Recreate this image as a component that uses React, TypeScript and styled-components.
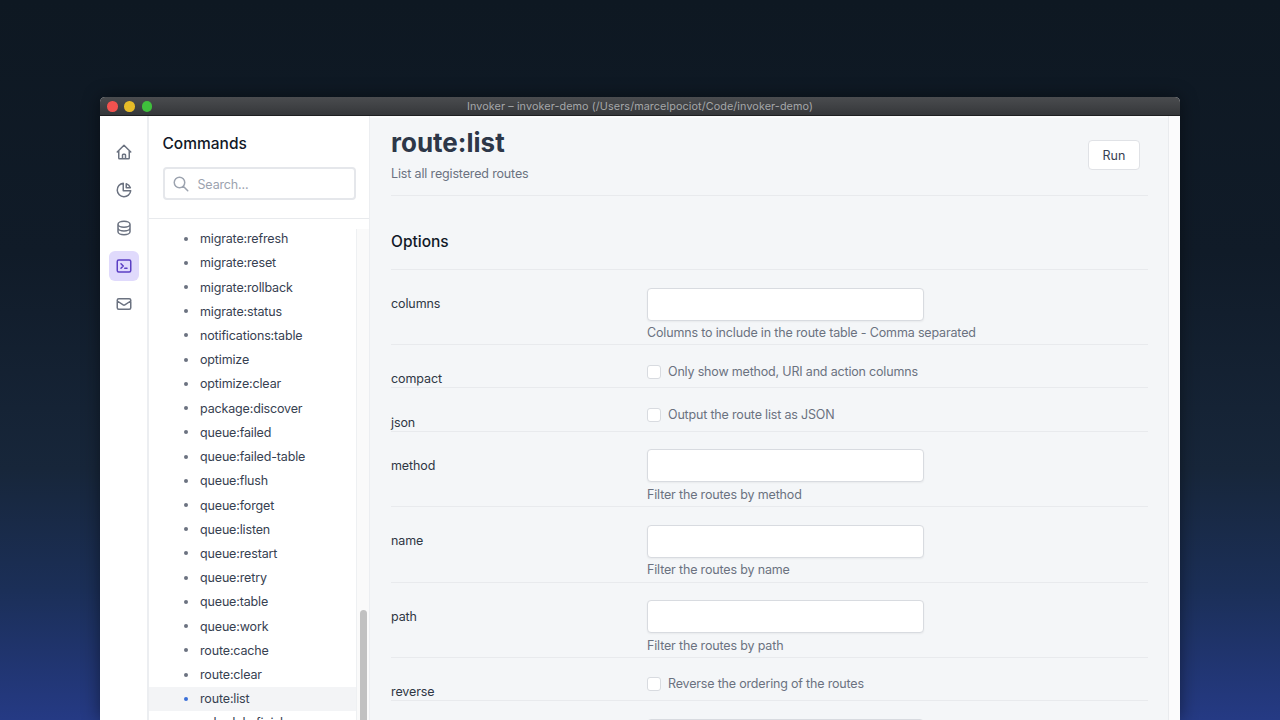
import React from 'react';
import styled, { createGlobalStyle } from 'styled-components';

const GlobalStyle = createGlobalStyle`
  html, body {
    margin: 0;
    height: 720px;
    overflow: hidden;
    background: linear-gradient(180deg, #0e1822 0%, #101b28 35%, #17263a 65%, #1b2f58 82%, #253a84 100%);
    font-family: 'Inter', 'Liberation Sans', sans-serif;
  }
  * { box-sizing: border-box; }
`;

const Stage = styled.div`
  height: 720px;
  padding: 97px 100px 0;
  overflow: hidden;
`;

const Window = styled.div`
  height: 623px;
  border-radius: 5px 5px 0 0;
  overflow: hidden;
  display: flex;
  flex-direction: column;
  background: #fff;
  box-shadow: 0 0 18px rgba(0, 0, 0, 0.45);
`;

const TitleBar = styled.div`
  height: 19px;
  flex: none;
  display: flex;
  align-items: center;
  justify-content: center;
  position: relative;
  padding-top: 1px;
  background: linear-gradient(180deg, #4a4c4f 0%, #35373a 100%);
  border-bottom: 1px solid #1e1f21;
  color: #a5a7a9;
  font-size: 10.8px;
  letter-spacing: 0.1px;
`;

const Lights = styled.div`
  position: absolute;
  left: 7px;
  top: 4px;
  display: flex;
  gap: 6.8px;
`;

const Light = styled.span<{ $color: string }>`
  width: 10.5px;
  height: 10.5px;
  border-radius: 50%;
  background: ${(p) => p.$color};
`;

const Body = styled.div`
  flex: 1;
  min-height: 0;
  display: flex;
`;

const Rail = styled.nav`
  width: 49px;
  flex: none;
  border-right: 2px solid #eceef1;
  padding-top: 21px;
  display: flex;
  flex-direction: column;
  align-items: center;
  gap: 8px;
`;

const RailButton = styled.div<{ $active?: boolean }>`
  width: 30px;
  height: 30px;
  border-radius: 6px;
  display: flex;
  align-items: center;
  justify-content: center;
  background: ${(p) => (p.$active ? '#e0dafc' : 'transparent')};
  color: ${(p) => (p.$active ? '#5b3fc4' : '#6b7280')};
`;

const Panel = styled.aside`
  width: 221px;
  flex: none;
  display: flex;
  flex-direction: column;
  border-right: 1px solid #eceef1;
`;

const PanelHead = styled.div`
  height: 103px;
  flex: none;
  padding: 18px 13px 0 13.5px;
  border-bottom: 1px solid #e8eaed;
`;

const PanelTitle = styled.h2`
  margin: 0 0 13px;
  font-size: 15.5px;
  line-height: 20px;
  font-weight: 500;
  color: #111827;
`;

const Search = styled.div`
  height: 33px;
  border: 2px solid #e5e7eb;
  border-radius: 4px;
  display: flex;
  align-items: center;
  gap: 7.5px;
  padding: 1px 0 0 7.5px;
  color: #9ca3af;
  font-size: 12.5px;
  letter-spacing: -0.15px;
`;

const ListWrap = styled.div`
  flex: 1;
  min-height: 0;
  margin-top: 10px;
  display: flex;
  overflow: hidden;
`;

const List = styled.ul`
  list-style: none;
  margin: 0;
  padding: 0;
  width: 208px;
  flex: none;
  overflow: hidden;
  border-right: 1px solid #eef0f2;
`;

const Item = styled.li<{ $active?: boolean }>`
  height: 24.23px;
  display: flex;
  align-items: center;
  padding-left: 35px;
  gap: 12px;
  font-size: 12.5px;
  letter-spacing: -0.15px;
  color: #374151;
  background: ${(p) => (p.$active ? '#f3f4f6' : 'transparent')};
  &:first-child {
    margin-top: -2.5px;
  }
  &::before {
    content: '';
    width: 4px;
    height: 4px;
    border-radius: 50%;
    background: ${(p) => (p.$active ? '#3b6fd8' : '#6b7280')};
  }
`;

const ScrollTrack = styled.div`
  flex: 1;
  position: relative;
  background: #fafafa;
`;

const ScrollThumb = styled.div`
  position: absolute;
  left: 3px;
  top: 381px;
  width: 7px;
  height: 120px;
  border-radius: 4px;
  background: #c1c1c1;
`;

const Main = styled.main`
  width: 798px;
  flex: none;
  background: #f4f6f8;
  border-top: 2px solid #fafbfc;
  padding: 0 20px 0 21px;
  overflow: hidden;
`;

const Strip = styled.div`
  flex: 1;
  background: #fbfbfc;
  border-left: 1px solid #e9ebee;
`;

const Header = styled.header`
  height: 78px;
  display: flex;
  justify-content: space-between;
  align-items: flex-start;
  border-bottom: 1px solid #e8eaed;
`;

const CommandName = styled.h1`
  margin: 8px 0 0;
  font-size: 26px;
  line-height: 34px;
  font-weight: 700;
  color: #2d3748;
`;

const CommandInfo = styled.p`
  margin: 5px 0 0;
  font-size: 12.5px;
  letter-spacing: -0.15px;
  line-height: 18px;
  color: #6b7280;
`;

const RunButton = styled.button`
  width: 52px;
  height: 30px;
  margin: 22px 8px 0 0;
  background: #fff;
  border: 1px solid #e0e2e6;
  border-radius: 4px;
  font: inherit;
  font-size: 12.5px;
  color: #374151;
`;

const OptionsTitle = styled.h3`
  margin: 0;
  height: 74px;
  padding-top: 36px;
  font-size: 15.5px;
  line-height: 20px;
  font-weight: 500;
  color: #111827;
  border-bottom: 1px solid #e8eaed;
`;

const Row = styled.div<{ $height: number }>`
  height: ${(p) => p.$height}px;
  display: grid;
  grid-template-columns: 256px 1fr;
  border-bottom: 1px solid #e8eaed;
`;

const RowLabel = styled.label<{ $flag?: boolean }>`
  font-size: 12.5px;
  letter-spacing: -0.1px;
  line-height: ${(p) => (p.$flag ? 16 : 18)}px;
  color: #2f3744;
  font-weight: 400;
  align-self: ${(p) => (p.$flag ? 'end' : 'start')};
  padding-top: ${(p) => (p.$flag ? 0 : 25)}px;
`;

const Field = styled.div`
  padding-top: 17.5px;
`;

const TextInput = styled.div`
  width: 277px;
  height: 33px;
  background: #fff;
  border: 1px solid #d8dbe0;
  border-radius: 4px;
  box-shadow: 0 1px 2px rgba(0, 0, 0, 0.05);
`;

const Hint = styled.div`
  margin-top: 4.5px;
  font-size: 12.5px;
  letter-spacing: -0.16px;
  line-height: 16px;
  color: #6b7280;
`;

const CheckRow = styled.div`
  padding-top: 11px;
  display: flex;
  align-items: center;
  gap: 7px;
  font-size: 12.5px;
  letter-spacing: -0.18px;
  line-height: 18px;
  color: #6b7280;
`;

const CheckBox = styled.span`
  width: 14px;
  height: 14px;
  background: #fff;
  border: 1px solid #d8dbe0;
  border-radius: 3px;
`;

const commands = [
  'migrate:refresh', 'migrate:reset', 'migrate:rollback', 'migrate:status', 'notifications:table',
  'optimize', 'optimize:clear', 'package:discover', 'queue:failed', 'queue:failed-table',
  'queue:flush', 'queue:forget', 'queue:listen', 'queue:restart', 'queue:retry', 'queue:table',
  'queue:work', 'route:cache', 'route:clear', 'route:list', 'schedule:finish',
];

const options = [
  { name: 'columns', hint: 'Columns to include in the route table - Comma separated', height: 75 },
  { name: 'compact', hint: 'Only show method, URI and action columns', flag: true, height: 43.3 },
  { name: 'json', hint: 'Output the route list as JSON', flag: true, height: 43.5 },
  { name: 'method', hint: 'Filter the routes by method', height: 75.4 },
  { name: 'name', hint: 'Filter the routes by name', height: 75.4 },
  { name: 'path', hint: 'Filter the routes by path', height: 75.2 },
  { name: 'reverse', hint: 'Reverse the ordering of the routes', flag: true, height: 43.3 },
  { name: 'sort', hint: '', height: 75 },
];

const Icon = ({ children }: { children: React.ReactNode }) => (
  <svg width="18" height="18" viewBox="0 0 24 24" fill="none" stroke="currentColor" strokeWidth="2" strokeLinecap="round" strokeLinejoin="round">
    {children}
  </svg>
);

const App = () => {
  return (
    <Stage>
      <GlobalStyle />
      <Window>
        <TitleBar>
          <Lights>
            <Light $color="#f0524f" />
            <Light $color="#e5bb28" />
            <Light $color="#3fbf3c" />
          </Lights>
          Invoker – invoker-demo (/Users/marcelpociot/Code/invoker-demo)
        </TitleBar>
        <Body>
          <Rail>
            <RailButton>
              <Icon>
                <path d="M3 12l2-2m0 0l7-7 7 7M5 10v10a1 1 0 001 1h3m10-11l2 2m-2-2v10a1 1 0 01-1 1h-3m-6 0a1 1 0 001-1v-4a1 1 0 011-1h2a1 1 0 011 1v4a1 1 0 001 1m-6 0h6" />
              </Icon>
            </RailButton>
            <RailButton>
              <Icon>
                <path d="M11 3.055A9.001 9.001 0 1020.945 13H11V3.055z" />
                <path d="M20.488 9H15V3.512A9.025 9.025 0 0120.488 9z" />
              </Icon>
            </RailButton>
            <RailButton>
              <Icon>
                <path d="M4 7v10c0 2.21 3.582 4 8 4s8-1.79 8-4V7M4 7c0 2.21 3.582 4 8 4s8-1.79 8-4M4 7c0-2.21 3.582-4 8-4s8 1.79 8 4m0 5c0 2.21-3.582 4-8 4s-8-1.79-8-4" />
              </Icon>
            </RailButton>
            <RailButton $active>
              <Icon>
                <path d="M8 9l3 3-3 3m5 0h3M5 20h14a2 2 0 002-2V6a2 2 0 00-2-2H5a2 2 0 00-2 2v12a2 2 0 002 2z" />
              </Icon>
            </RailButton>
            <RailButton>
              <Icon>
                <path d="M3 8l7.89 5.26a2 2 0 002.22 0L21 8M5 19h14a2 2 0 002-2V7a2 2 0 00-2-2H5a2 2 0 00-2 2v10a2 2 0 002 2z" />
              </Icon>
            </RailButton>
          </Rail>
          <Panel>
            <PanelHead>
              <PanelTitle>Commands</PanelTitle>
              <Search>
                <Icon>
                  <path d="M21 21l-6-6m2-5a7 7 0 11-14 0 7 7 0 0114 0z" />
                </Icon>
                Search...
              </Search>
            </PanelHead>
            <ListWrap>
              <List>
                {commands.map((c) => (
                  <Item key={c} $active={c === 'route:list'}>
                    {c}
                  </Item>
                ))}
              </List>
              <ScrollTrack>
                <ScrollThumb />
              </ScrollTrack>
            </ListWrap>
          </Panel>
          <Main>
            <Header>
              <div>
                <CommandName>route:list</CommandName>
                <CommandInfo>List all registered routes</CommandInfo>
              </div>
              <RunButton>Run</RunButton>
            </Header>
            <OptionsTitle>Options</OptionsTitle>
            {options.map((o) => (
              <Row key={o.name} $height={o.height}>
                <RowLabel $flag={o.flag}>{o.name}</RowLabel>
                {o.flag ? (
                  <CheckRow>
                    <CheckBox />
                    {o.hint}
                  </CheckRow>
                ) : (
                  <Field>
                    <TextInput />
                    <Hint>{o.hint}</Hint>
                  </Field>
                )}
              </Row>
            ))}
          </Main>
          <Strip />
        </Body>
      </Window>
    </Stage>
  );
};

export default App;
